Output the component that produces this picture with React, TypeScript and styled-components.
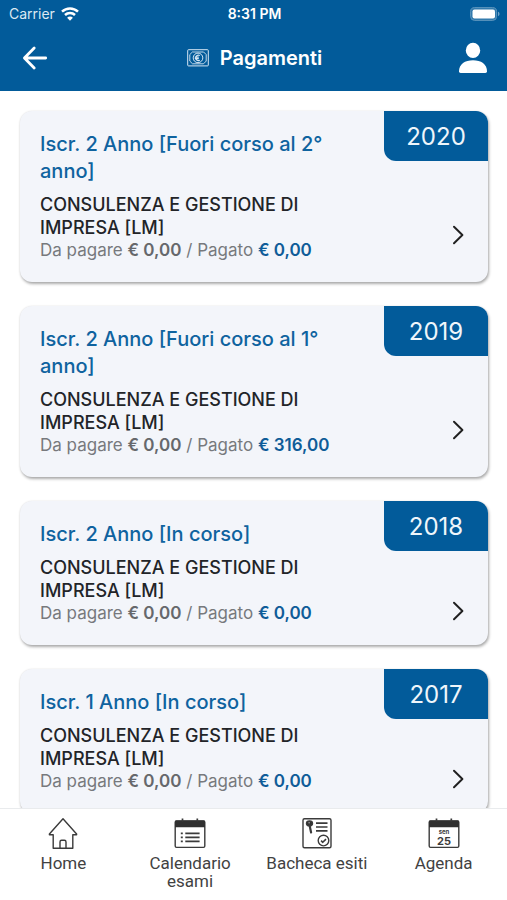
import React from "react";
import styled, { createGlobalStyle } from "styled-components";

const BLUE = "#025b9a";
const SANS = '"Inter", "Liberation Sans", sans-serif';

const GlobalStyle = createGlobalStyle`
  *, *::before, *::after { box-sizing: border-box; }
  body { margin: 0; background: #fff; font-family: ${SANS}; }
  h1, h2, p, ul { margin: 0; padding: 0; }
  button { font: inherit; }
  a { color: inherit; text-decoration: none; }
`;

const Screen = styled.div`
  display: flex;
  flex-direction: column;
  height: 100vh;
  overflow: hidden;
`;

const Header = styled.header`
  flex: none;
  background: ${BLUE};
  color: #fff;
`;

const StatusBar = styled.div`
  display: grid;
  grid-template-columns: 1fr auto 1fr;
  align-items: center;
  height: 28px;
  padding: 0 7px 0 9px;
  font-size: 14px;
  line-height: 20px;
`;

const Carrier = styled.div`
  display: flex;
  align-items: center;
  gap: 6px;
  color: #dce9f2;
`;

const Clock = styled.time`
  font-weight: 600;
`;

const BatteryIcon = styled.svg`
  justify-self: end;
`;

const TitleBar = styled.div`
  display: grid;
  grid-template-columns: 1fr auto 1fr;
  align-items: center;
  height: 63px;
  padding: 0 18px 4px 20px;
`;

const IconButton = styled.button<{ $end?: boolean }>`
  display: flex;
  justify-self: ${(p) => (p.$end ? "end" : "start")};
  padding: 0;
  border: 0;
  background: none;
  color: inherit;
  cursor: pointer;
`;

const Title = styled.h1`
  display: flex;
  align-items: center;
  gap: 11px;
  font-size: 20px;
  line-height: 28px;
  font-weight: 600;
`;

const PaymentList = styled.ul`
  flex: 1;
  min-height: 0;
  display: flex;
  flex-direction: column;
  gap: 24px;
  padding: 20px 19px 0 20px;
  overflow: hidden;
  list-style: none;
`;

const Item = styled.li`
  flex: none;
`;

const Card = styled.a`
  display: grid;
  grid-template-columns: minmax(0, 1fr) 104px;
  border-radius: 12px;
  background: #f3f5fa;
  box-shadow: 1px 2px 3px rgba(0, 0, 0, 0.32), 0 0 2px rgba(0, 0, 0, 0.1);
  overflow: hidden;
`;

const CardText = styled.div`
  padding: 20px 24px 20px 20px;
`;

const Enrolment = styled.h2`
  margin-bottom: 8px;
  color: #0f639f;
  font-size: 20px;
  line-height: 27px;
  font-weight: 500;
`;

const Course = styled.p`
  color: #222428;
  font-size: 18px;
  line-height: 23px;
  font-weight: 500;
`;

const Amounts = styled.p`
  color: #77797d;
  font-size: 17px;
  line-height: 23px;
`;

const Due = styled.strong`
  color: #66686c;
  font-weight: 600;
`;

const Paid = styled.strong`
  color: #0f5c98;
  font-weight: 600;
`;

const CardSide = styled.div`
  display: flex;
  flex-direction: column;
`;

const Year = styled.span`
  height: 50px;
  border-bottom-left-radius: 12px;
  background: ${BLUE};
  color: #eff6fb;
  font-size: 24px;
  line-height: 52px;
  text-align: center;
`;

const Chevron = styled.span`
  flex: 1;
  display: flex;
  align-items: center;
  justify-content: flex-end;
  padding: 26px 21px 0 0;
  color: #222;
`;

const TabBar = styled.nav`
  flex: none;
  position: relative;
  display: grid;
  grid-template-columns: repeat(4, minmax(0, 1fr));
  min-height: 92px;
  padding-top: 6px;
  border-top: 1px solid #e9ebed;
  background: #fff;
  color: #424242;
  font-family: "Roboto", sans-serif;
  font-size: 17px;
  line-height: 18px;
  text-align: center;
`;

const Tab = styled.a`
  display: flex;
  flex-direction: column;
  align-items: center;
  gap: 3px;
  padding: 0 12px;
`;

const WifiIcon = () => (
  <svg width="18" height="14" viewBox="0 0 18 14" fill="none" stroke="#fff" strokeWidth="2.5" aria-hidden="true">
    <path d="M1 4.7C5.5.4 12.5.4 17 4.7" />
    <path d="M4 8C6.8 5.3 11.2 5.3 14 8" />
    <path d="M9 13.7 6.1 10.7C7.7 9.2 10.3 9.2 11.9 10.7Z" fill="#fff" stroke="none" />
  </svg>
);

const Battery = () => (
  <BatteryIcon width="30" height="14" viewBox="0 0 30 14" role="img" aria-label="Batteria">
    <rect x=".6" y=".6" width="26" height="12.8" rx="4" fill="#3079ac" stroke="#5d95bd" />
    <rect x="2.5" y="2.5" width="22.5" height="9" rx="2" fill="#fff" />
    <path d="M28 4.8c2 .5 2 3.9 0 4.4Z" fill="#6fa2c7" />
  </BatteryIcon>
);

const BackIcon = () => (
  <svg width="30" height="30" viewBox="0 0 30 30" fill="none" stroke="currentColor" strokeWidth="2.8" strokeLinecap="round" strokeLinejoin="round" aria-hidden="true">
    <path d="M14.2 5 4.4 15l9.8 10M4.8 15H25.7" />
  </svg>
);

const BanknoteIcon = () => (
  <svg width="22" height="18" viewBox="0 0 22 18" fill="none" stroke="#d5e6f3" aria-hidden="true">
    <rect x=".7" y=".7" width="20.6" height="16.2" rx=".8" strokeWidth="1" />
    <path d="M5.5 3H16.5M5.5 14.8H16.5M2.8 5.7V12M19.2 5.7V12M2.7 5.7 5.5 2.9M19.3 5.7 16.5 2.9M2.7 12l2.8 2.8M19.3 12l-2.8 2.8" strokeWidth=".9" />
    <circle cx="11" cy="8.9" r="4.8" strokeWidth="1" />
    <path d="M12.8 6.6c-2-1.2-4 .2-4 2.3s2 3.5 4 2.3M7.8 8.2h4M7.8 9.7h4" strokeWidth="1.2" />
  </svg>
);

const UserIcon = () => (
  <svg width="32" height="32" viewBox="0 0 32 32" fill="currentColor" aria-hidden="true">
    <ellipse cx="16" cy="8.4" rx="7.2" ry="7.7" />
    <path d="M2 29.3C2 22 8 18.2 16 18.2S30 22 30 29.3Q30 31 28.4 31H3.6Q2 31 2 29.3Z" />
  </svg>
);

const ChevronIcon = () => (
  <svg width="18" height="22" viewBox="0 0 18 22" fill="none" stroke="currentColor" strokeWidth="2" strokeLinecap="round" strokeLinejoin="round" aria-hidden="true">
    <path d="m5 2.8 8.4 8.2L5 19.2" />
  </svg>
);

const TabSvg = styled.svg.attrs({
  width: 36,
  height: 36,
  viewBox: "0 0 36 36",
  fill: "none",
  stroke: "#3b3b3b",
  strokeWidth: 1.4,
  strokeLinejoin: "round",
  "aria-hidden": true,
})``;

const HomeIcon = () => (
  <TabSvg>
    <path d="M18 3.7 4.4 19v.8H8.2v13.4H27.8V19.8h3.8V19Z" />
    <path d="M15 33v-6.1q0-1.6 1.6-1.6h2.8q1.6 0 1.6 1.6V33" />
  </TabSvg>
);

const CalendarFrame = ({ children }: { children: React.ReactNode }) => (
  <TabSvg>
    <rect x="3.2" y="6" width="29.6" height="26.4" rx="1.3" />
    <path d="M3 12.3V6.5Q3 5.4 4.1 5.4H31.9Q33 5.4 33 6.5v5.8Z" fill="#303030" stroke="none" />
    <path d="M10.5 3.5v3M25.3 3.5v3" strokeWidth="1.7" />
    {children}
  </TabSvg>
);

const ExamCalendarIcon = () => (
  <CalendarFrame>
    <path d="M13.3 18.4H27.6M13.3 22.4H27.6M13.3 26.4H27.6" strokeWidth="1.6" />
    <path d="M8.8 18.4h2M8.8 22.4h2M8.8 26.4h2" strokeWidth="1.6" />
  </CalendarFrame>
);

const AgendaIcon = () => (
  <CalendarFrame>
    <g fill="#3b3b3b" stroke="none" textAnchor="middle" fontFamily="Inter, sans-serif" fontWeight="700">
      <text x="18" y="18.5" fontSize="6">sen</text>
      <text x="18" y="29.5" fontSize="11">25</text>
    </g>
  </CalendarFrame>
);

const ResultsIcon = () => (
  <TabSvg>
    <rect x="4" y="3.7" width="28" height="29" rx="1.5" />
    <ellipse cx="10.5" cy="8.4" rx="3" ry="2.4" fill="#303030" />
    <path d="m10.5 10 1.6 7.5" strokeWidth="2.2" strokeLinecap="round" />
    <path d="M9.6 7.8h1" stroke="#fff" strokeWidth="1" />
    <path d="M17 8.2H28.5M17 12H28.5M17 15.8H28.5" strokeWidth="1.7" />
    <circle cx="24.5" cy="25.6" r="5.3" />
    <path d="m22.1 25.7 1.7 1.6 3.2-3.2" strokeWidth="1.6" />
  </TabSvg>
);

interface Payment {
  year: number;
  enrolment: string;
  paid: string;
}

const payments: Payment[] = [
  { year: 2020, enrolment: "Iscr. 2 Anno [Fuori corso al 2° anno]", paid: "€ 0,00" },
  { year: 2019, enrolment: "Iscr. 2 Anno [Fuori corso al 1° anno]", paid: "€ 316,00" },
  { year: 2018, enrolment: "Iscr. 2 Anno [In corso]", paid: "€ 0,00" },
  { year: 2017, enrolment: "Iscr. 1 Anno [In corso]", paid: "€ 0,00" },
];

const tabs = [
  { label: "Home", href: "#home", Icon: HomeIcon },
  { label: "Calendario esami", href: "#calendario", Icon: ExamCalendarIcon },
  { label: "Bacheca esiti", href: "#esiti", Icon: ResultsIcon },
  { label: "Agenda", href: "#agenda", Icon: AgendaIcon },
];

const PaymentCard = ({ year, enrolment, paid }: Payment) => (
  <Item>
    <Card href={`#pagamenti-${year}`}>
      <CardText>
        <Enrolment>{enrolment}</Enrolment>
        <Course>CONSULENZA E GESTIONE DI IMPRESA [LM]</Course>
        <Amounts>
          Da pagare <Due>€ 0,00</Due> / Pagato <Paid>{paid}</Paid>
        </Amounts>
      </CardText>
      <CardSide>
        <Year>{year}</Year>
        <Chevron>
          <ChevronIcon />
        </Chevron>
      </CardSide>
    </Card>
  </Item>
);

export default function App() {
  return (
    <Screen>
      <GlobalStyle />
      <Header>
        <StatusBar>
          <Carrier>
            Carrier
            <WifiIcon />
          </Carrier>
          <Clock>8:31 PM</Clock>
          <Battery />
        </StatusBar>
        <TitleBar>
          <IconButton type="button" aria-label="Indietro">
            <BackIcon />
          </IconButton>
          <Title>
            <BanknoteIcon />
            Pagamenti
          </Title>
          <IconButton type="button" aria-label="Profilo" $end>
            <UserIcon />
          </IconButton>
        </TitleBar>
      </Header>
      <PaymentList>
        {payments.map((p) => (
          <PaymentCard key={p.year} {...p} />
        ))}
      </PaymentList>
      <TabBar>
        {tabs.map(({ label, href, Icon }) => (
          <Tab key={label} href={href}>
            <Icon />
            <span>{label}</span>
          </Tab>
        ))}
      </TabBar>
    </Screen>
  );
}
